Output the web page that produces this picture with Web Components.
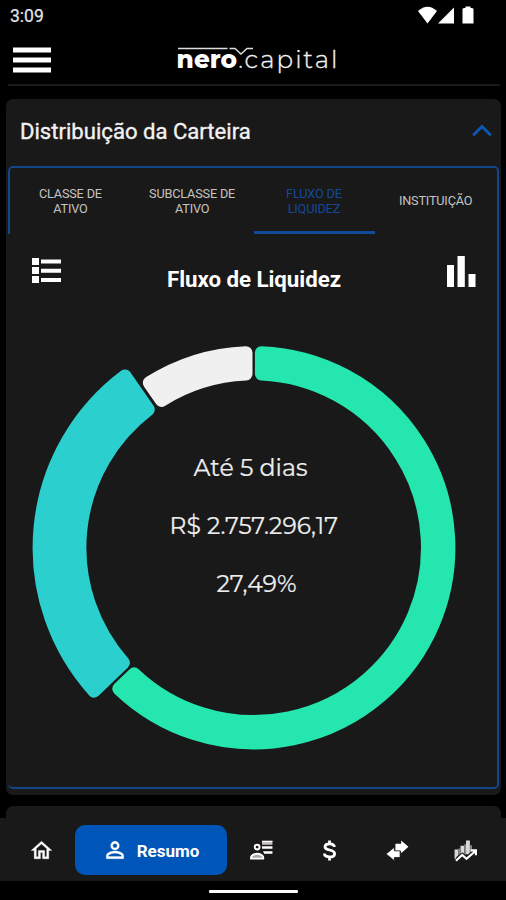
<!DOCTYPE html>
<html lang="pt-BR">
<head>
<meta charset="utf-8">
<title>Nero Capital</title>
<style>
  html, body{margin:0;background:#000}
  body{font-family:Roboto, "Liberation Sans", sans-serif;color:#f2f2f2}
</style>
</head>
<body>
<app-shell>
  <status-bar slot="top">3:09</status-bar>
  <brand-header slot="top"></brand-header>

  <accordion-panel>
    <span slot="title">Distribuição da Carteira</span>
    <tab-strip>
      <tab-item>CLASSE DE<br>ATIVO</tab-item>
      <tab-item>SUBCLASSE DE<br>ATIVO</tab-item>
      <tab-item active>FLUXO DE<br>LIQUIDEZ</tab-item>
      <tab-item>INSTITUIÇÃO</tab-item>
    </tab-strip>
    <chart-heading>Fluxo de Liquidez</chart-heading>
    <donut-chart label="Até 5 dias" value="R$ 2.757.296,17" percent="27,49%"></donut-chart>
  </accordion-panel>

  <bottom-nav slot="bottom">
    <nav-item icon="home"></nav-item>
    <nav-item icon="person" active>Resumo</nav-item>
    <nav-item icon="contact"></nav-item>
    <nav-item icon="dollar"></nav-item>
    <nav-item icon="swap"></nav-item>
    <nav-item icon="chart"></nav-item>
  </bottom-nav>
</app-shell>

<script>
  (function() {
    let define = (name, html, setup) => {
      let template = document.createElement('template');
      template.innerHTML = html;
      customElements.define(name, class extends HTMLElement {
        constructor() {
          super();
          this.attachShadow({mode: 'open'}).append(template.content.cloneNode(true));
        }
        connectedCallback() {
          if (setup) setup(this, this.shadowRoot);
        }
      });
    };

    define('app-shell', `
      <style>
        :host{display:flex;flex-direction:column;height:900px;width:506px;overflow:hidden;background:#000}
        main{flex:1;min-height:0;overflow:hidden;padding:13px 5px 0 6px;box-sizing:border-box}
        .next{height:40px;margin-top:11px;border-radius:7px 7px 0 0;background:#191919}
        .home{height:19px;display:flex;justify-content:center;align-items:center}
        .home i{width:89px;height:3px;border-radius:1px;background:#fafafa;margin-top:2px}
      </style>
      <slot name="top"></slot>
      <main><slot></slot><div class="next"></div></main>
      <slot name="bottom"></slot>
      <div class="home"><i></i></div>
    `);

    define('status-bar', `
      <style>
        :host{display:flex;justify-content:space-between;height:32px;padding:0 32px 0 10px;font-size:17.5px;line-height:33px;color:#e6e6e6;-webkit-text-stroke:.2px}
        svg{margin-top:6px}
      </style>
      <span><slot></slot></span>
      <svg width="57" height="18" viewBox="417 6 57 18" fill="#fff">
        <path d="M418 11Q427.500 2.500 437 11L427.500 23.500Z"/>
        <path d="M454 7.500V23.500H438Z"/>
        <path d="M465.500 8V6.500H470.500V8H472Q473.500 8 473.500 9.500V23.500H462.500V9.500Q462.500 8 464 8Z"/>
      </svg>
    `);

    define('brand-header', `
      <style>
        :host{display:block;height:54px;padding:0 6px 0 8px}
        div{height:52px;display:flex;align-items:flex-start;border-bottom:2px solid #1a1a1a}
        .menu{margin:15px 0 0 5px}
        .logo{margin:8px 0 0 120px}
      </style>
      <div>
        <svg class="menu" width="38" height="27" fill="#fff">
          <path d="M0 .5h38v5H0zM0 10.500h38v5H0zM0 20.500h38v5H0z"/>
        </svg>
        <svg class="logo" width="170" height="36" viewBox="171 40 170 36" font-family="Montserrat, Lato, sans-serif">
          <g fill="none" stroke="#ddd" stroke-width="1.400">
            <path d="M178 48.500H227.500"/>
            <path d="M229.500 48.500H235L241 54L247 48.500H253"/>
          </g>
          <text x="176.500" y="67.700" font-size="26" font-weight="800" fill="#fff" textLength="60.500" lengthAdjust="spacingAndGlyphs">nero</text>
          <text x="238.300" y="67.700" font-size="22" fill="#ddd">.</text>
          <text x="244.500" y="67.700" font-size="24.500" font-weight="300" fill="#f2f2f2" stroke="#f2f2f2" stroke-width=".3" textLength="93">capital</text>
        </svg>
      </div>
    `);

    define('accordion-panel', `
      <style>
        :host{display:block;height:696px;border-radius:7px;background:#191919;padding:0 2px;box-sizing:border-box}
        header{height:67px;display:flex;align-items:center;justify-content:space-between;padding:0 7px 0 12px;font-size:22.1px;box-sizing:border-box}
        .title{margin-top:-3px;white-space:nowrap;-webkit-text-stroke:.35px}
        svg{margin-top:-5px}
        section{height:623px;box-sizing:border-box;border:2px solid #14468a;border-left-color:transparent;border-left-width:0;border-radius:5px}
      </style>
      <header>
        <span class="title"><slot name="title"></slot></span>
        <svg width="20" height="13" fill="none" stroke="#0b58b5" stroke-width="3"><path d="M1.200 11.200L10 2.500L18.800 11.200"/></svg>
      </header>
      <section><slot></slot></section>
    `);

    define('tab-strip', `
      <style>
        :host{display:grid;grid-template-columns:repeat(4, 1fr);height:66px;border-left:2px solid #14468a;border-top-left-radius:4px;box-sizing:border-box}
      </style>
      <slot></slot>
    `);

    define('tab-item', `
      <style>
        :host{display:flex;align-items:center;justify-content:center;text-align:center;font-size:12.7px;line-height:14.5px;color:#c4c4c4;box-sizing:border-box;border-bottom:3px solid transparent;padding:4px 1px 0 0;letter-spacing:-.17px}
        :host([active]){color:#14499a;border-bottom-color:#124a99}
      </style>
      <span><slot></slot></span>
    `);

    define('chart-heading', `
      <style>
        :host{display:flex;justify-content:space-between;height:66px;padding:21px 21px 0 24px;box-sizing:border-box;color:#fff}
        svg{margin-top:1px}
        b{font-size:22.3px;line-height:26px;margin-top:11px;font-weight:700;letter-spacing:-.05px;white-space:nowrap}
      </style>
      <svg width="29" height="28" fill="#fff">
        <path d="M0 2h7v7H0zM0 11h7v7H0zM0 20h7v7H0zM9 3.500h20v4H9zM9 12.800h20v4H9zM9 22h20v4H9z"/>
      </svg>
      <b><slot></slot></b>
      <svg width="29" height="34" fill="#fff">
        <path d="M0 9h7v22H0zM10.500 0h7.300v31H10.500zM21.500 18h7v13h-7z"/>
      </svg>
    `);

    define('donut-chart', `
      <style>
        :host{display:block;height:460px}
        svg{display:block}
      </style>
      <svg width="488" height="460" viewBox="8 300 488 460">
        <g class="ring"></g>
        <g fill="#ededed" stroke="#ededed" stroke-width=".2" font-family="Montserrat, Inter, sans-serif" font-size="23.500">
          <text class="label" x="193.500" y="476.300" textLength="114" lengthAdjust="spacingAndGlyphs"></text>
          <text class="value" x="169.500" y="534.300" textLength="168.500" lengthAdjust="spacingAndGlyphs"></text>
          <text class="percent" x="216.500" y="591.500" textLength="80" lengthAdjust="spacingAndGlyphs"></text>
        </g>
      </svg>
    `, (host, root) => {
      for (let name of ['label', 'value', 'percent']) {
        root.querySelector('.' + name).textContent = host.getAttribute(name);
      }
      let cx = 253.7, cy = 547.7, round = 6.5, gap = 1.2;
      // angles in degrees, clockwise from the top
      let slices = [
        {from: 0, to: 226, outer: 201.7, color: '#25e6af'},
        {from: 226, to: 325.2, outer: 221.1, color: '#2bcfce'},
        {from: 325.4, to: 360, outer: 201.7, color: '#f0f0f0'}
      ];
      let point = (r, a) => `${(cx + r * Math.sin(a)).toFixed(2)} ${(cy - r * Math.cos(a)).toFixed(2)}`;
      let ring = root.querySelector('.ring');
      for (let s of slices) {
        // the outline is inset, then a round-joined stroke gives the soft corners
        let R = s.outer - round, r = 167.3 + round;
        let dR = Math.asin((round + gap) / R), dr = Math.asin((round + gap) / r);
        let a = s.from * Math.PI / 180, b = s.to * Math.PI / 180;
        let large = s.to - s.from > 180 ? 1 : 0;
        let path = document.createElementNS('http://www.w3.org/2000/svg', 'path');
        path.setAttribute('d', `M${point(R, a + dR)}A${R} ${R} 0 ${large} 1 ${point(R, b - dR)}L${point(r, b - dr)}A${r} ${r} 0 ${large} 0 ${point(r, a + dr)}Z`);
        path.setAttribute('fill', s.color);
        path.setAttribute('stroke', s.color);
        path.setAttribute('stroke-width', round * 2);
        path.setAttribute('stroke-linejoin', 'round');
        ring.append(path);
      }
    });

    define('bottom-nav', `
      <style>
        :host{display:grid;grid-template-columns:68px 152px repeat(4, 1fr);height:63px;padding:7px 6px 6px 7px;box-sizing:border-box;background:#191919}
      </style>
      <slot></slot>
    `);

    let icons = {
      home: '<path d="M12 5.690l5 4.500V18h-2v-6H9v6H7v-7.810l5-4.500M12 3L2 12h3v8h6v-6h2v6h6v-8h3z" stroke="#fff" stroke-width=".3"/>',
      person: '<path d="M12 5.900a2.100 2.100 0 1 1 0 4.200 2.100 2.100 0 0 1 0-4.200m0 9c2.970 0 6.100 1.460 6.100 2.100v1.100H5.900V17c0-.640 3.130-2.100 6.100-2.100M12 4a4 4 0 1 0 0 8 4 4 0 0 0 0-8zm0 9c-2.670 0-8 1.340-8 4v3h16v-3c0-2.660-5.330-4-8-4z" stroke="#fff" stroke-width=".3"/>',
      contact: '<g fill="none" stroke="#fff" stroke-width="1.900"><circle cx="7.800" cy="8.700" r="2.300"/><path fill="#aaa" d="M2 19.800v-1.400c0-1.900 3-3.200 5.800-3.200s5.800 1.300 5.800 3.200v1.400z"/></g><path fill="#c9c0c1" d="M12.500 2.800H22.500V6.500H12.500z"/><path d="M12.500 2.600h10v1.300h-10zM12.500 7.800h10v2.400h-10zM13.500 12.700h9v2.500h-8z"/>',
      dollar: '<path fill="none" stroke="#fff" stroke-width="2.700" d="M16.600 8.700C16.600 6.700 14.700 5.700 12.100 5.700C9.400 5.700 7.700 6.900 7.700 8.600C7.700 12.500 16.900 10.500 16.900 15C16.900 17 14.900 18.200 12.100 18.200C9.200 18.200 7.100 17 7.100 14.800M12 2.300V6M12 18V21.700"/>',
      swap: '<path d="M10 5.500H15.500V2.300L22.500 8.500L15.500 14.700V12.500H10z"/><path stroke="#191919" stroke-width=".8" d="M14.500 12.300H9V8.800L1 15.300L9 21.800V18.700H14.500z"/>',
      chart: '<path fill="#d8d8d8" d="M1.500 11h3.600v6.500l-3.600 3zM7.200 7.500h3.600v8l-3.600 2zM12.500 2.300h3.700v14l-3.700-1z"/><path d="M5.100 10h2.100v6h-2.100zM10.800 6h1.700v10h-1.700zM16.200 7h2v7h-2z" fill="#888"/><path fill="none" stroke="#191919" stroke-width="3.600" d="M4 20L9 16L13 19.500L20 13"/><path fill="none" stroke="#fff" stroke-width="2.100" d="M2.800 21.800L8.800 16.200L13 20L21.500 12.500M17 11.900H22V16.500"/>'
    };

    define('nav-item', `
      <style>
        :host{display:flex;align-items:center;justify-content:center;height:50px;color:#fff;font-size:17px;font-weight:700}
        :host([active]){background:#0055b8;border-radius:10px;gap:9px;padding-right:1px;box-sizing:border-box}
        :host(:not([active])) span{display:none}
        svg{margin-top:1px}
        :host([active]) svg{width:26px;height:26px;margin-top:0}
        span{margin-top:1px}
      </style>
      <svg width="25" height="25" viewBox="0 0 24 24" fill="#fff"></svg>
      <span><slot></slot></span>
    `, (host, root) => {
      root.querySelector('svg').innerHTML = icons[host.getAttribute('icon')];
    });
  })();
</script>
</body>
</html>
